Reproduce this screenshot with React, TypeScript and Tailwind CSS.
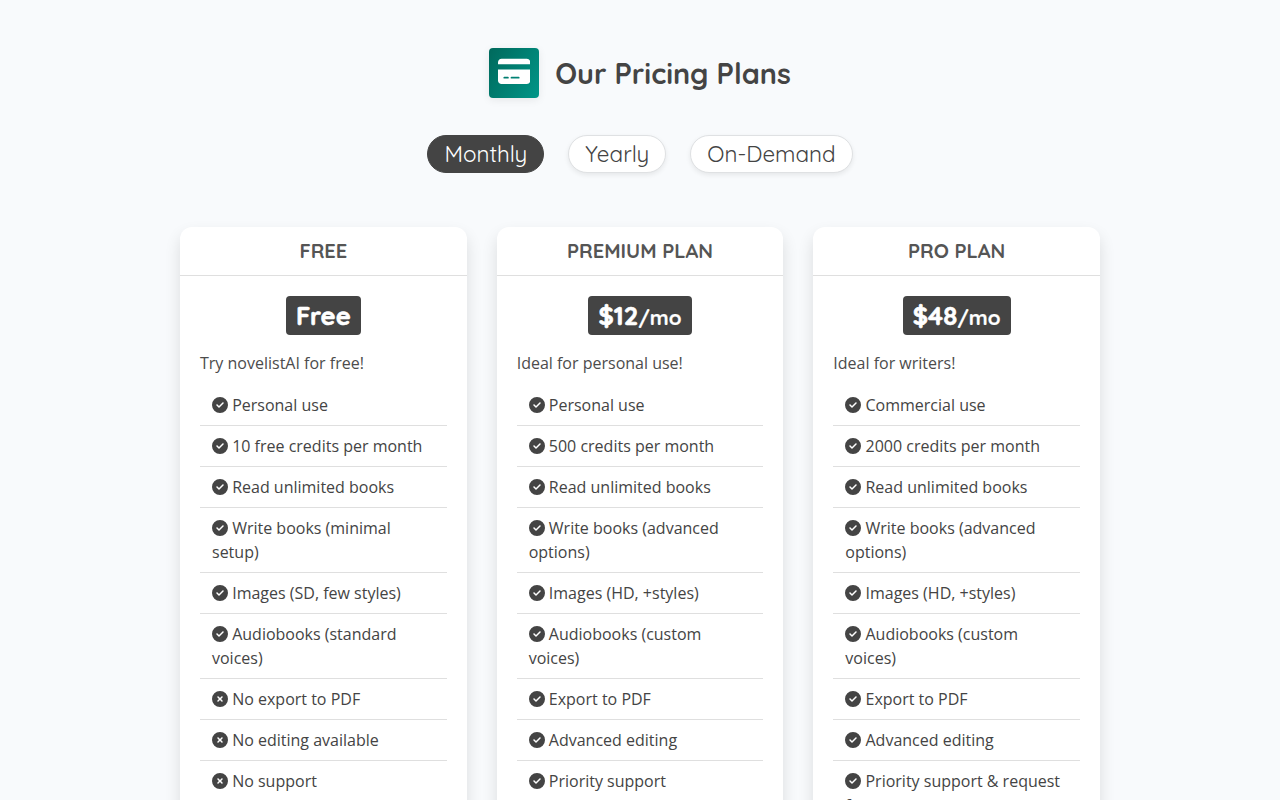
import clsx from 'clsx';
import { FaCircleCheck, FaCircleXmark, FaCreditCard } from 'react-icons/fa6';

type Feature = { label: string; included?: boolean };

type Plan = {
  name: string;
  price: string;
  period?: string;
  summary: string;
  features: Feature[];
};

const BILLING = ['Monthly', 'Yearly', 'On-Demand'];

const PLANS: Plan[] = [
  {
    name: 'FREE',
    price: 'Free',
    summary: 'Try novelistAI for free!',
    features: [
      { label: 'Personal use' },
      { label: '10 free credits per month' },
      { label: 'Read unlimited books' },
      { label: 'Write books (minimal setup)' },
      { label: 'Images (SD, few styles)' },
      { label: 'Audiobooks (standard voices)' },
      { label: 'No export to PDF', included: false },
      { label: 'No editing available', included: false },
      { label: 'No support', included: false },
    ],
  },
  {
    name: 'PREMIUM PLAN',
    price: '$12',
    period: '/mo',
    summary: 'Ideal for personal use!',
    features: [
      { label: 'Personal use' },
      { label: '500 credits per month' },
      { label: 'Read unlimited books' },
      { label: 'Write books (advanced options)' },
      { label: 'Images (HD, +styles)' },
      { label: 'Audiobooks (custom voices)' },
      { label: 'Export to PDF' },
      { label: 'Advanced editing' },
      { label: 'Priority support' },
    ],
  },
  {
    name: 'PRO PLAN',
    price: '$48',
    period: '/mo',
    summary: 'Ideal for writers!',
    features: [
      { label: 'Commercial use' },
      { label: '2000 credits per month' },
      { label: 'Read unlimited books' },
      { label: 'Write books (advanced options)' },
      { label: 'Images (HD, +styles)' },
      { label: 'Audiobooks (custom voices)' },
      { label: 'Export to PDF' },
      { label: 'Advanced editing' },
      { label: 'Priority support & request features' },
    ],
  },
];

function FeatureRow({ label, included = true }: Feature) {
  const Icon = included ? FaCircleCheck : FaCircleXmark;
  return (
    <li className="border-b border-[#dfdfdf] px-3 py-2 leading-6">
      <Icon className="inline-block size-4 align-[-2px]" /> {label}
    </li>
  );
}

function PlanCard({ plan }: { plan: Plan }) {
  return (
    <section className="rounded-xl bg-white shadow-[0_8px_16px_rgba(0,0,0,0.12)]">
      <h2 className="flex h-[49px] items-center justify-center border-b border-[#dfdfdf] font-['Quicksand',Lato,sans-serif] text-xl font-bold text-[#555]">
        {plan.name}
      </h2>
      <div className="p-5">
        <div className="mx-auto flex h-[39px] w-fit items-baseline rounded bg-[#444] px-2.5 font-['Quicksand',Lato,sans-serif] text-[25.6px] leading-[39px] font-bold whitespace-nowrap text-white [-webkit-text-stroke:0.6px_white]">
          <span>{plan.price}</span>
          {plan.period && <span className="text-[20.5px] [-webkit-text-stroke:0.2px_white]">{plan.period}</span>}
        </div>
        <p className="mt-4 leading-6 text-[#4c4c4c]">{plan.summary}</p>
        <ul className="mt-2.5">
          {plan.features.map((f) => (
            <FeatureRow key={f.label} {...f} />
          ))}
        </ul>
      </div>
    </section>
  );
}

export default function App() {
  return (
    <main className="h-screen overflow-hidden bg-[#f8fafc] pt-12 font-['Open_Sans',sans-serif] text-base text-[#444]">
      <header className="flex items-center justify-center gap-4">
        <div className="flex size-[50px] items-center justify-center rounded bg-linear-[120deg] from-[#00695c] to-[#009688] pb-[3px] shadow-[0_2px_8px_rgba(0,0,0,0.08)]">
          <FaCreditCard className="h-[28.8px] w-[32.4px] text-white" />
        </div>
        <h1 className="font-['Quicksand',Lato,sans-serif] text-[28.8px] leading-[50px] font-bold whitespace-nowrap">
          Our Pricing Plans
        </h1>
      </header>

      <nav className="mt-[37px] flex justify-center gap-6">
        {BILLING.map((label, i) => (
          <button
            key={label}
            className={clsx(
              "h-[38px] rounded-full border px-4 font-['Quicksand',Lato,sans-serif] text-[22.4px] leading-9 whitespace-nowrap",
              i === 0
                ? 'border-[#444] bg-[#444] text-white'
                : 'border-[#dfe1e3] bg-white shadow-[0_2px_5px_rgba(0,0,0,0.08)]',
            )}
          >
            {label}
          </button>
        ))}
      </nav>

      <div className="mx-auto mt-[54px] grid w-[920px] grid-cols-3 gap-[30px]">
        {PLANS.map((plan) => (
          <PlanCard key={plan.name} plan={plan} />
        ))}
      </div>
    </main>
  );
}
